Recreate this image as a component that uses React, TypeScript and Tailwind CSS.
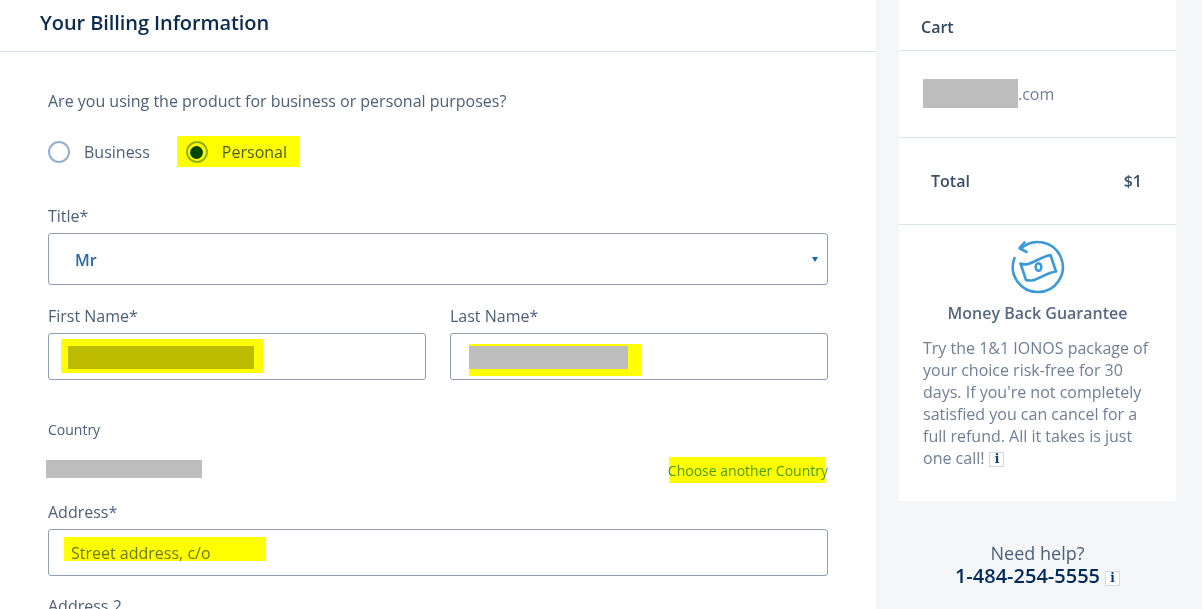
import type { ReactNode } from "react";

function Highlight({ className }: { className: string }) {
  return <div className={`pointer-events-none absolute bg-[#ffff00] mix-blend-multiply ${className}`} />;
}

function Field({ label, children }: { label: string; children?: ReactNode }) {
  return (
    <div className="flex-1">
      <div className="text-base leading-[22px] text-[#4d6079]">{label}</div>
      <div className="relative mt-[6px] h-[47px] rounded-[3px] border border-[#8f9eb2] bg-white">{children}</div>
    </div>
  );
}

function Radio({ checked, label }: { checked?: boolean; label: string }) {
  return (
    <div className="flex items-center gap-[14px]">
      <div className="flex h-[22px] w-[22px] items-center justify-center rounded-full border-2 border-[#94b0d0] bg-white">
        {checked && <div className="h-[13px] w-[13px] rounded-full bg-[#004480]" />}
      </div>
      <span className="text-base text-[#4d6079]">{label}</span>
    </div>
  );
}

function InfoBox() {
  return (
    <span className="ml-[5px] inline-flex h-[15px] w-[15px] items-center justify-center border border-[#d3d8de] bg-white align-[1px] font-['DejaVu_Serif',serif] text-[12px] leading-none font-bold text-[#0b3a7e]">
      i
    </span>
  );
}

function MoneyBackIcon() {
  return (
    <svg width="54" height="54" viewBox="0 0 54 54" fill="none" stroke="#3d9ad9" strokeWidth="2.6" strokeLinecap="round" strokeLinejoin="round">
      <path d="M9.5 9A25 25 0 1 1 3.5 18" />
      <path d="M13.5 2.5L8.5 8L15.5 12" />
      <path d="M9.5 23.5C18 27.5 27 17.5 39.5 15L45 31.5C33 33 25 43 15 40Z" />
      <ellipse cx="27.5" cy="27" rx="2.8" ry="3.8" />
    </svg>
  );
}

export default function App() {
  return (
    <div className="flex h-[609px] w-[1202px] overflow-hidden bg-[#f4f6f8] font-['Open_Sans',sans-serif]">
      <main className="w-[876px] shrink-0 bg-white">
        <header className="flex h-[52px] items-start border-b border-[#dbe3e8] pl-10 pt-[9px]">
          <h1 className="text-[20px] leading-[28px] font-semibold tracking-[-0.08px] text-[#0b2a4f]">Your Billing Information</h1>
        </header>

        <div className="pl-12 pr-12">
          <p className="mt-[38px] text-base leading-[22px] tracking-[-0.01px] text-[#4d6079]">
            Are you using the product for business or personal purposes?
          </p>

          <div className="relative mt-[29px] flex h-[22px] items-center gap-[36px]">
            <Radio label="Business" />
            <Radio checked label="Personal" />
            <Highlight className="-top-[5px] left-[129px] h-[31px] w-[122px]" />
          </div>

          <div className="mt-[42px] text-base leading-[22px] text-[#4d6079]">Title*</div>
          <div className="mt-[6px] flex h-[52px] items-center justify-between rounded-[3px] border border-[#8f9eb2] pl-[26px] pr-[9px]">
            <span className="mt-[2px] text-base font-semibold text-[#2a6aa8]">Mr</span>
            <svg width="6" height="6" viewBox="0 0 6 6" className="text-[#0b6ab5]">
              <path d="M0 1h6L3 6z" fill="currentColor" />
            </svg>
          </div>

          <div className="mt-5 flex gap-6">
            <Field label="First Name*">
              <div className="absolute left-[19px] top-[12px] h-[23px] w-[186px] bg-[#bdbdbd]" />
              <Highlight className="left-[12px] top-[5px] h-[34px] w-[202px]" />
            </Field>
            <Field label="Last Name*">
              <div className="absolute left-[18px] top-[10px] h-[32px] w-[172px] bg-[#ffff00]" />
              <div className="absolute left-[18px] top-[12px] h-[23px] w-[159px] bg-[#bdbdbd]" />
            </Field>
          </div>

          <div className="mt-[40px] text-sm leading-5 text-[#4d6079]">Country</div>
          <div className="mt-[20px] flex h-[18px] items-center justify-between">
            <div className="-ml-[2px] h-[18px] w-[156px] bg-[#bdbdbd]" />
            <div className="relative mt-[2px]">
              <span className="text-sm leading-5 whitespace-nowrap text-[#4b9ad0]">Choose another Country</span>
              <Highlight className="-top-[1px] left-[1px] h-[26px] w-[156px]" />
            </div>
          </div>

          <div className="mt-[23px]">
            <Field label="Address*">
              <span className="absolute left-[22px] top-[12px] text-base leading-[22px] text-[#6b7a8f]">Street address, c/o</span>
              <Highlight className="left-[15px] top-[7px] h-[24px] w-[202px]" />
            </Field>
          </div>

          <div className="mt-[19px] text-base leading-[22px] text-[#4d6079]">Address 2</div>
        </div>
      </main>

      <aside className="flex-1 pl-[23px]">
        <div className="w-[277px] bg-white">
          <div className="flex h-[51px] items-center border-b border-[#d8e4ea] pt-[4px] pl-[22px] text-base font-semibold text-[#33475f]">
            Cart
          </div>
          <div className="flex h-[87px] items-start border-b border-[#d8e4ea] pl-6 pt-[28px]">
            <div className="h-[29px] w-[95px] bg-[#bdbdbd]" />
            <span className="text-base leading-[30px] text-[#6f7f95]">.com</span>
          </div>
          <div className="flex h-[87px] items-center justify-between border-b border-[#d8e4ea] pl-8 pr-[34px] text-base font-semibold text-[#3c4f69]">
            <span>Total</span>
            <span>$1</span>
          </div>
          <div className="flex h-[276px] flex-col items-center pt-[15px]">
            <MoneyBackIcon />
            <div className="mt-[8px] text-base leading-[22px] font-semibold text-[#566980]">Money Back Guarantee</div>
            <p className="mt-[13px] w-full pl-6 pr-4 text-base leading-[22px] text-[#6f7f95]">
              Try the 1&amp;1 IONOS package of your choice risk-free for 30 days. If you're not completely satisfied you can cancel for a full refund. All it takes is just one call!
              <InfoBox />
            </p>
          </div>
        </div>
        <div className="mt-[40px] flex w-[277px] flex-col items-center">
          <div className="text-[18px] leading-6 text-[#4d6079]">Need help?</div>
          <div className="text-[20px] leading-[22px] font-semibold text-[#002a5c]">
            1-484-254-5555
            <InfoBox />
          </div>
        </div>
      </aside>
    </div>
  );
}
